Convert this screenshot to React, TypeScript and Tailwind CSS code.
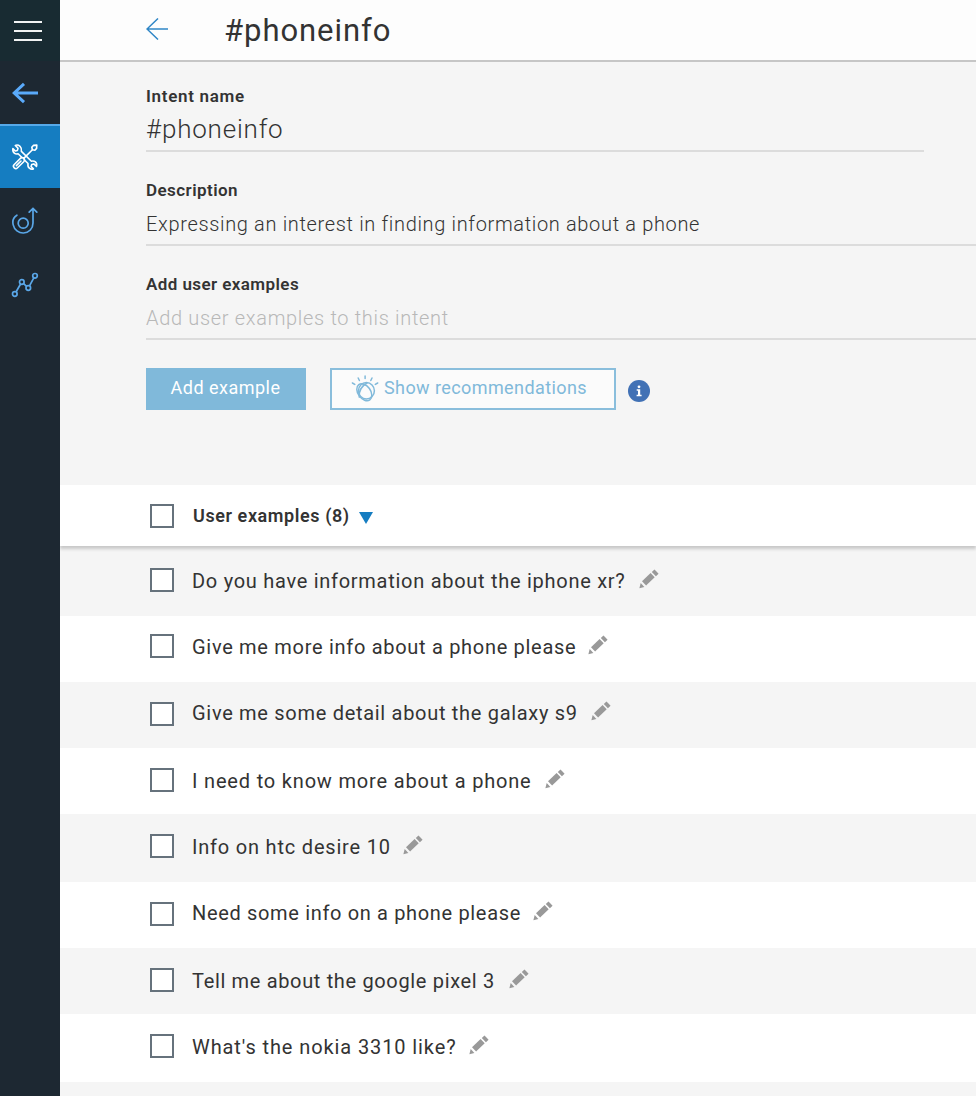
const rows = [
  { text: "Do you have information about the iphone xr?", tracking: "tracking-[0.72px]", height: "h-[66px]", gap: "ml-[13px]", boxTop: "mt-[18px]", textTop: "mt-[17px]" },
  { text: "Give me more info about a phone please", tracking: "tracking-[0.7px]", height: "h-[66px]", gap: "ml-[12px]", boxTop: "mt-[18px]", textTop: "mt-[17px]" },
  { text: "Give me some detail about the galaxy s9", tracking: "tracking-[0.7px]", height: "h-[66px]", gap: "ml-[13px]", boxTop: "mt-[20px]", textTop: "mt-[17px]" },
  { text: "I need to know more about a phone", tracking: "tracking-[0.82px]", height: "h-[66px]", gap: "ml-[13px]", boxTop: "mt-[20px]", textTop: "mt-[19px]" },
  { text: "Info on htc desire 10", tracking: "tracking-[0.8px]", height: "h-[68px]", gap: "ml-[12px]", boxTop: "mt-[20px]", textTop: "mt-[19px]" },
  { text: "Need some info on a phone please", tracking: "tracking-[0.66px]", height: "h-[66px]", gap: "ml-[12px]", boxTop: "mt-[20px]", textTop: "mt-[17px]" },
  { text: "Tell me about the google pixel 3", tracking: "tracking-[0.66px]", height: "h-[66px]", gap: "ml-[14px]", boxTop: "mt-[20px]", textTop: "mt-[19px]" },
  { text: "What's the nokia 3310 like?", tracking: "tracking-[0.9px]", height: "h-[68px]", gap: "ml-[12px]", boxTop: "mt-[20px]", textTop: "mt-[19px]" },
];

function Checkbox() {
  return <span role="checkbox" aria-checked="false" className="block size-[24px] border-2 border-[#66727c] bg-white" />;
}

function Pencil() {
  return (
    <svg className="size-5 fill-[#999999]" viewBox="0 0 20 20" aria-hidden="true">
      <path d="M.4 19.3 1.7 14.1 5.4 18z" />
      <path d="M3 12.2 11.6 4 15.7 8.3 7.1 16.5z" />
      <path d="M12.8 3 15.5.5 19.6 4.7 16.9 7.2z" />
    </svg>
  );
}

function Tools() {
  return (
    <svg className="size-[28px]" viewBox="0 0 28 28" fill="none" stroke="#fff" strokeWidth="1.6" strokeLinejoin="round" strokeLinecap="round" aria-hidden="true">
      <path d="M4.3 2.4 7 5.2 6.4 7.4 4.3 8 1.9 5.6C1.6 7.6 2.1 9.4 3.6 10.4 4.8 11.2 6 11 7.1 10.8L17 20.5C16.7 22.4 17.1 24.2 18.4 25.2 19.6 26.2 21.1 26.4 22.4 25.9L20.1 23.5 20.7 21.5 22.8 20.9 25.5 23.4C26 21.6 25.6 19.9 24.4 18.9 23.2 17.9 21.6 17.9 20.4 18.2L10.4 8.4C10.8 6.2 10.2 4.5 9 3.3 7.6 2.1 5.8 1.8 4.3 2.4Z" />
      <path d="M22.4 2.4 25.8 2.1 25.6 5.4 23.9 7.2 21.4 6.7 20.8 4.3Z" fill="#157dc1" />
      <path d="M21.4 6.7 12.5 15.6M9.4 15.4 3 21.8C1.2 23.8 4.3 26.8 6.3 25L12.7 18.7C13.9 17.4 13.8 16.5 12.7 15.4 11.6 14.4 10.4 14.4 9.4 15.4Z" fill="#157dc1" />
      <path d="M10 18 5.4 22.6" />
    </svg>
  );
}

function Watson() {
  return (
    <svg className="size-[28px]" viewBox="0 0 28 28" fill="none" stroke="#80b9da" strokeWidth="1.5" strokeLinecap="round" aria-hidden="true">
      <ellipse cx="15.4" cy="15.8" rx="8" ry="8.2" />
      <ellipse cx="13.3" cy="17.2" rx="6.3" ry="9.4" transform="rotate(-36 13.3 17.2)" />
      <path d="M16 8C11.5 10.5 7.6 15.6 8.3 22.2" />
      <path d="M14.1.9v2.6M7.2 3l1.2 2.5M21 3l-1.2 2.5M1.4 8l2.4 1.4M26.7 8l-2.4 1.4" />
    </svg>
  );
}

function Sidebar() {
  return (
    <nav className="relative z-10 flex w-[60px] shrink-0 flex-col bg-[#1d2832]">
      <button className="flex h-[61px] items-center justify-center bg-[#182b32] pr-1" aria-label="Menu">
        <svg className="h-[24px] w-[28px]" viewBox="0 0 28 24" stroke="#f1f3f3" strokeWidth="2" aria-hidden="true">
          <path d="M0 3h28M0 12h28M0 21h28" />
        </svg>
      </button>
      <button className="flex h-[63px] items-center pl-[12px]" aria-label="Back">
        <svg className="mt-[1px] h-[22px] w-[27px]" viewBox="0 0 27 22" fill="none" stroke="#5aaafa" strokeWidth="3" aria-hidden="true">
          <path d="M26 11H2M12 1.8 2.2 11 12 20.2" />
        </svg>
      </button>
      <button className="flex h-[64px] items-center border-t-2 border-[#56a9e8] bg-[#157dc1] pl-[11px]" aria-label="Build">
        <Tools />
      </button>
      <button className="flex h-[64px] items-center pl-[11px]" aria-label="Improve">
        <svg className="h-[28px] w-[28px]" viewBox="0 0 28 28" fill="none" stroke="#5aa7e8" strokeWidth="1.7" strokeLinecap="round" aria-hidden="true">
          <circle cx="12.2" cy="17.2" r="5" />
          <path d="M5.9 9.2C2.7 11.1 1.3 15 2.2 18.9 3.3 23.9 7.8 27.2 12.5 27 18 26.8 22 22.6 22 17V2.8M18.2 6.2 22 2.4 25.8 6.2" />
        </svg>
      </button>
      <button className="flex h-[64px] items-center pl-[11px]" aria-label="Analytics">
        <svg className="mt-[2px] h-[28px] w-[28px]" viewBox="0 0 28 28" fill="none" stroke="#5aa7e8" strokeWidth="1.7" aria-hidden="true">
          <circle cx="3.8" cy="23" r="2.3" />
          <circle cx="10.8" cy="11" r="2.3" />
          <circle cx="17.3" cy="17" r="2.3" />
          <circle cx="24" cy="4.8" r="2.3" />
          <path d="M5 21 9.6 13M12.6 12.6l3 2.8M18.5 14.9 22.8 6.8" />
        </svg>
      </button>
    </nav>
  );
}

export default function App() {
  return (
    <div className="flex h-[1096px] w-full overflow-hidden bg-[#f5f5f5] font-[Roboto,'Noto_Sans',sans-serif] text-[#333333]">
      <Sidebar />
      <main className="min-w-0 flex-1">
        <header className="flex h-[62px] items-center border-b-2 border-[#c6c6c6] bg-[#fdfdfd] pl-[86px]">
          <svg className="-mt-[2px] h-[22px] w-[22px]" viewBox="0 0 22 22" fill="none" stroke="#2f86c6" strokeWidth="1.5" aria-hidden="true">
            <path d="M22 11H1M12 .5 1 11 12 21.5" />
          </svg>
          <h1 className="mt-[2px] ml-[56px] text-[31px] leading-[40px] tracking-[0.95px]">#phoneinfo</h1>
        </header>

        <section className="h-[423px] pt-6 pl-[86px]">
          <label className="block h-5 text-[17px] leading-5 font-semibold tracking-[0.7px]">Intent name</label>
          <div className="h-[46px] w-[778px] border-b-2 border-[#dcdcdc] pt-[2px] text-[26px] leading-[42px] font-light tracking-[0.8px]">#phoneinfo</div>
          <label className="mt-7 block h-5 text-[17px] leading-5 font-semibold tracking-[0.44px]">Description</label>
          <div className="h-[46px] border-b-2 border-[#dcdcdc] pt-[4px] text-[20px] leading-[40px] font-light tracking-[0.66px]">
            Expressing an interest in finding information about a phone
          </div>
          <label className="mt-7 block h-5 text-[17px] leading-5 font-semibold tracking-[0.42px]">Add user examples</label>
          <div className="h-[46px] border-b-2 border-[#dcdcdc] pt-[4px] text-[20px] leading-[40px] font-light tracking-[0.68px] text-[#b8b8b8]">
            Add user examples to this intent
          </div>
          <div className="mt-7 flex h-[42px]">
            <button className="w-[160px] bg-[#80b9da] pr-[1px] pb-[3px] text-[18px] tracking-[0.48px] text-white">Add example</button>
            <button className="ml-6 flex w-[286px] items-center border-2 border-[#8abedc] bg-[#fbfbfb] pl-[19px] text-[18px] tracking-[0.41px] text-[#80b9da]">
              <Watson />
              <span className="-mt-[3px] ml-[5px] whitespace-nowrap">Show recommendations</span>
            </button>
            <svg className="mt-[12px] ml-[12px] size-[22px]" viewBox="0 0 22 22" aria-label="Information">
              <circle cx="11" cy="11" r="11" fill="#4171b5" />
              <circle cx="11" cy="6.8" r="1.4" fill="#fff" />
              <path d="M8.7 9.3h3.5v5.5h1.4v1.5H8.6v-1.5H10v-4H8.7z" fill="#fff" />
            </svg>
          </div>
        </section>

        <section>
          <div className="relative flex h-[61px] items-center bg-white pl-[90px] shadow-[0_3px_3px_0_#c8c8c8]">
            <Checkbox />
            <h2 className="ml-[19px] text-[18px] leading-6 font-semibold tracking-[0.58px]">User examples (8)</h2>
            <svg className="mt-1 ml-[9px] h-[12px] w-[14px]" viewBox="0 0 14 12" aria-hidden="true">
              <path d="M0 0h14L7 12z" fill="#157dc1" />
            </svg>
          </div>
          <ul className="pt-1">
            {rows.map((r) => (
              <li key={r.text} className={`flex items-start pl-[90px] even:bg-white ${r.height}`}>
                <div className={r.boxTop}>
                  <Checkbox />
                </div>
                <div className={`ml-[18px] flex items-center ${r.textTop}`}>
                  <span className={`text-[20px] leading-7 whitespace-nowrap ${r.tracking}`}>{r.text}</span>
                  <span className={`-mt-[4px] ${r.gap}`}>
                    <Pencil />
                  </span>
                </div>
              </li>
            ))}
          </ul>
        </section>
      </main>
    </div>
  );
}
